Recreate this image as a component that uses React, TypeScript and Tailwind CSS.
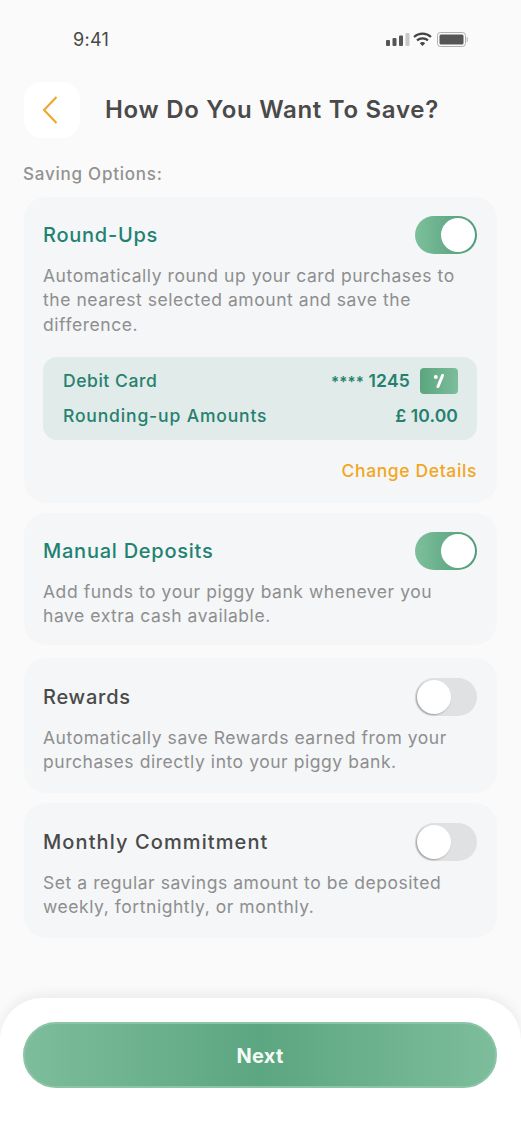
import React from 'react';

const font = "font-['Inter','Liberation_Sans',sans-serif]";

const Toggle: React.FC<{ on: boolean }> = ({ on }) => (
  <div
    className={`flex h-[38px] w-[62px] shrink-0 items-center rounded-full ${
      on
        ? 'justify-end bg-gradient-to-r from-[#7dbf9b] to-[#4f9b78]'
        : 'justify-start bg-[#e0e1e2]'
    }`}
  >
    <div
      className={`h-[34px] w-[34px] rounded-full bg-white ${
        on ? 'mr-[2px]' : 'ml-[2px] shadow-[-1px_1px_2px_rgba(0,0,0,0.3)]'
      }`}
    />
  </div>
);

interface OptionProps {
  title: string;
  on: boolean;
  text: string[];
  className: string;
  titleClass?: string;
  children?: React.ReactNode;
}

const Option: React.FC<OptionProps> = ({ title, on, text, className, titleClass = 'tracking-[0.75px]', children }) => (
  <section className={`rounded-[22px] bg-[#f4f6f8] pl-[19px] pr-[20px] ${className}`}>
    <div className="flex items-center justify-between">
      <h2 className={`text-[20px] font-medium ${titleClass} ${on ? 'text-[#1f8272]' : 'text-[#4a4a4a]'}`}>
        {title}
      </h2>
      <Toggle on={on} />
    </div>
    <div className="mt-[10px] text-[17.5px] leading-[24.4px] tracking-[0.55px] text-[#8e8e8e]">
      {text.map((line) => (
        <div key={line} className="whitespace-nowrap">
          {line}
        </div>
      ))}
    </div>
    {children}
  </section>
);

export default function App() {
  return (
    <div className={`flex h-[1130px] w-[521px] flex-col overflow-hidden bg-[#fafafa] ${font}`}>
      {/* Status bar */}
      <div className="flex h-[82px] items-start justify-between pl-[73px] pr-[53px] pt-[29px]">
        <span className="text-[18px] leading-[22px] tracking-[0.3px] text-[#484848]">9:41</span>
        <svg width="83" height="16" viewBox="0 0 83 16" className="mt-[3px]">
          <rect x="1" y="8" width="4" height="6" rx="1" fill="#555" />
          <rect x="7.5" y="6" width="4" height="8" rx="1" fill="#555" />
          <rect x="14" y="3.5" width="4" height="10.5" rx="1" fill="#555" />
          <rect x="20.5" y="1" width="4" height="13" rx="1" fill="#c8c8c8" />
          <path d="M29 5a12.5 12.5 0 0 1 17 0M32 8.4a8.3 8.3 0 0 1 11 0" fill="none" stroke="#444" strokeWidth="2.2" />
          <path d="M34.8 11.2a4 4 0 0 1 5.4 0L37.5 14z" fill="#444" />
          <rect x="52.5" y="0.5" width="28" height="14" rx="3" fill="none" stroke="#b0b0b0" />
          <rect x="54.5" y="2.5" width="24" height="10" rx="1.5" fill="#555" />
          <rect x="81.5" y="5" width="1.5" height="5" rx="0.7" fill="#c8c8c8" />
        </svg>
      </div>

      {/* Header */}
      <div className="flex items-center pl-[24px]">
        <button className="flex h-[56px] w-[56px] items-center justify-start rounded-[18px] bg-white pl-[18px]">
          <svg width="16" height="28" viewBox="0 0 16 28">
            <path d="M14.5 1 2 14l12.5 13" fill="none" stroke="#f0a522" strokeWidth="2" />
          </svg>
        </button>
        <h1 className="ml-[25px] text-[24px] font-semibold tracking-[0.7px] text-[#4a4a4a]">
          How Do You Want To Save?
        </h1>
      </div>

      <div className="mt-[25px] pl-[23px] text-[17px] font-medium leading-[22px] tracking-[0.77px] text-[#929292]">
        Saving Options:
      </div>

      {/* Options */}
      <div className="mx-[24px] mt-[12px] flex w-[473px] flex-col">
        <Option
          title="Round-Ups"
          on
          className="h-[306px] pt-[19px]"
          text={[
            'Automatically round up your card purchases to',
            'the nearest selected amount and save the',
            'difference.',
          ]}
        >
          <div className="mt-[20px] flex h-[83px] flex-col justify-center gap-[9px] rounded-[14px] bg-[#e1ebe9] pl-[20px] pr-[19px] text-[17.5px] font-medium tracking-[0.85px] text-[#26806f]">
            <div className="flex h-[26px] items-center justify-between">
              <span className="tracking-[0.55px]">Debit Card</span>
              <div className="flex items-center gap-[10px]">
                <span className="font-semibold tracking-[0.2px]">
                  <span className="text-[15px] tracking-[0.1px]">****</span> 1245
                </span>
                <div className="flex h-[26px] w-[38px] items-center justify-center rounded-[4px] bg-gradient-to-r from-[#5aa57f] to-[#7dbd9b]">
                  <svg width="12" height="14" viewBox="0 0 12 14">
                    <circle cx="2.8" cy="3" r="2" fill="#fff" />
                    <path d="M9.5 1.5 5 12.5" stroke="#fff" strokeWidth="3" strokeLinecap="round" />
                  </svg>
                </div>
              </div>
            </div>
            <div className="flex h-[26px] items-center justify-between">
              <span>Rounding-up Amounts</span>
              <span className="font-semibold tracking-[0.1px]">£ 10.00</span>
            </div>
          </div>
          <div className="mt-[19px] text-right text-[17.5px] font-medium leading-[24px] tracking-[0.62px] text-[#f3a623]">
            Change Details
          </div>
        </Option>

        <Option
          title="Manual Deposits"
          on
          className="mt-[10px] h-[132px] pt-[19px]"
          text={['Add funds to your piggy bank whenever you', 'have extra cash available.']}
        />
        <Option
          title="Rewards"
          on={false}
          className="mt-[13px] h-[135px] pt-[20px]"
          text={['Automatically save Rewards earned from your', 'purchases directly into your piggy bank.']}
        />
        <Option
          title="Monthly Commitment"
          on={false}
          titleClass="tracking-[1.1px]"
          className="mt-[10px] h-[135px] pt-[20px]"
          text={['Set a regular savings amount to be deposited', 'weekly, fortnightly, or monthly.']}
        />
      </div>

      {/* Bottom sheet */}
      <div className="mt-[60px] flex-1 rounded-t-[42px] bg-white px-[23px] pt-[24px] shadow-[0_-4px_12px_rgba(0,0,0,0.06)]">
        <button className="h-[66px] w-[474px] rounded-full border-2 border-[#8cc4a8] bg-[linear-gradient(90deg,#7dbd9b_0%,#5ca681_50%,#7dbd9b_100%)] pt-[1px] text-[20px] font-bold tracking-[0.3px] text-[#f4faf6]">
          Next
        </button>
      </div>
    </div>
  );
}
